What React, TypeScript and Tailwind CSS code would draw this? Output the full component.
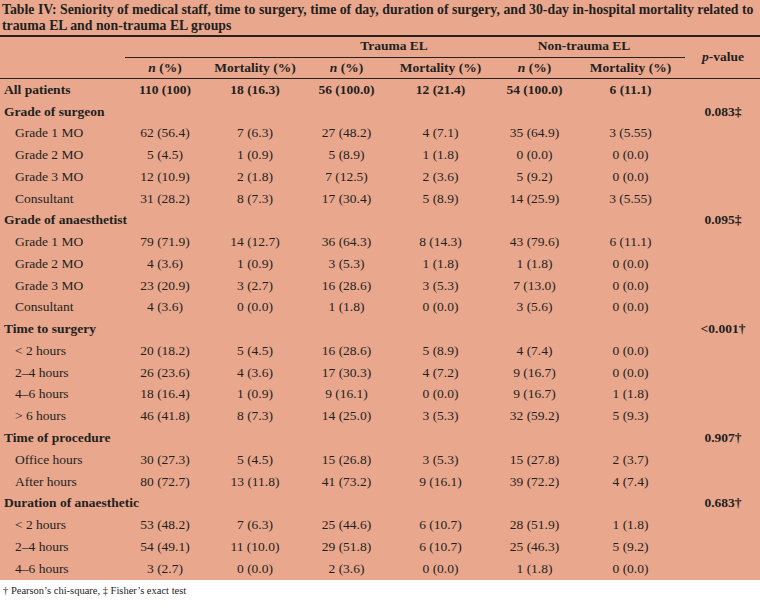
import React from 'react';

type Row = { label: string; cells?: string[]; p?: string; group?: boolean; bold?: boolean };

const rows: Row[] = [
  { label: 'All patients', bold: true, cells: ['110 (100)', '18 (16.3)', '56 (100.0)', '12 (21.4)', '54 (100.0)', '6 (11.1)'] },
  { label: 'Grade of surgeon', group: true, p: '0.083‡' },
  { label: 'Grade 1 MO', cells: ['62 (56.4)', '7 (6.3)', '27 (48.2)', '4 (7.1)', '35 (64.9)', '3 (5.55)'] },
  { label: 'Grade 2 MO', cells: ['5 (4.5)', '1 (0.9)', '5 (8.9)', '1 (1.8)', '0 (0.0)', '0 (0.0)'] },
  { label: 'Grade 3 MO', cells: ['12 (10.9)', '2 (1.8)', '7 (12.5)', '2 (3.6)', '5 (9.2)', '0 (0.0)'] },
  { label: 'Consultant', cells: ['31 (28.2)', '8 (7.3)', '17 (30.4)', '5 (8.9)', '14 (25.9)', '3 (5.55)'] },
  { label: 'Grade of anaesthetist', group: true, p: '0.095‡' },
  { label: 'Grade 1 MO', cells: ['79 (71.9)', '14 (12.7)', '36 (64.3)', '8 (14.3)', '43 (79.6)', '6 (11.1)'] },
  { label: 'Grade 2 MO', cells: ['4 (3.6)', '1 (0.9)', '3 (5.3)', '1 (1.8)', '1 (1.8)', '0 (0.0)'] },
  { label: 'Grade 3 MO', cells: ['23 (20.9)', '3 (2.7)', '16 (28.6)', '3 (5.3)', '7 (13.0)', '0 (0.0)'] },
  { label: 'Consultant', cells: ['4 (3.6)', '0 (0.0)', '1 (1.8)', '0 (0.0)', '3 (5.6)', '0 (0.0)'] },
  { label: 'Time to surgery', group: true, p: '<0.001†' },
  { label: '< 2 hours', cells: ['20 (18.2)', '5 (4.5)', '16 (28.6)', '5 (8.9)', '4 (7.4)', '0 (0.0)'] },
  { label: '2–4 hours', cells: ['26 (23.6)', '4 (3.6)', '17 (30.3)', '4 (7.2)', '9 (16.7)', '0 (0.0)'] },
  { label: '4–6 hours', cells: ['18 (16.4)', '1 (0.9)', '9 (16.1)', '0 (0.0)', '9 (16.7)', '1 (1.8)'] },
  { label: '> 6 hours', cells: ['46 (41.8)', '8 (7.3)', '14 (25.0)', '3 (5.3)', '32 (59.2)', '5 (9.3)'] },
  { label: 'Time of procedure', group: true, p: '0.907†' },
  { label: 'Office hours', cells: ['30 (27.3)', '5 (4.5)', '15 (26.8)', '3 (5.3)', '15 (27.8)', '2 (3.7)'] },
  { label: 'After hours', cells: ['80 (72.7)', '13 (11.8)', '41 (73.2)', '9 (16.1)', '39 (72.2)', '4 (7.4)'] },
  { label: 'Duration of anaesthetic', group: true, p: '0.683†' },
  { label: '< 2 hours', cells: ['53 (48.2)', '7 (6.3)', '25 (44.6)', '6 (10.7)', '28 (51.9)', '1 (1.8)'] },
  { label: '2–4 hours', cells: ['54 (49.1)', '11 (10.0)', '29 (51.8)', '6 (10.7)', '25 (46.3)', '5 (9.2)'] },
  { label: '4–6 hours', cells: ['3 (2.7)', '0 (0.0)', '2 (3.6)', '0 (0.0)', '1 (1.8)', '0 (0.0)'] },
];

const cols = 'grid grid-cols-[120px_90px_90px_93px_95px_93px_99px_80px]';

export default function App() {
  return (
    <div className="w-[760px] h-[607px] bg-white text-[#231f20] font-[family-name:Liberation_Serif,serif]">
      <div className="bg-[#e9a88e]">
        <h1 className="pt-[2px] pb-[2px] pl-[2px] pr-[2px] text-[13.8px] leading-[15.5px] font-bold">
          Table IV: Seniority of medical staff, time to surgery, time of day, duration of surgery, and 30-day in-hospital mortality related to trauma EL and non-trauma EL groups
        </h1>
        <div className="h-[2px] bg-[#2a2020]" />

        {/* header */}
        <div className={`${cols} grid-rows-[20px_1px_20px] text-[13.5px] font-bold`}>
          <div className="col-start-4 col-span-2 row-start-1 flex items-end justify-center pb-[1px]">Trauma EL</div>
          <div className="col-start-6 col-span-2 row-start-1 flex items-end justify-center pb-[1px]">Non-trauma EL</div>
          <div className="col-start-2 col-span-6 row-start-2 ml-[5px] -mr-[5px] bg-[#2a2020]" />
          <div className="col-start-8 row-start-1 row-span-3 flex items-center justify-center pl-[6px]">
            <span><i>p</i>-value</span>
          </div>
          {['n (%)', 'Mortality (%)', 'n (%)', 'Mortality (%)', 'n (%)', 'Mortality (%)'].map((h, i) => (
            <div key={i} className="row-start-3 flex items-center justify-center" style={{ gridColumnStart: i + 2 }}>
              {h.startsWith('n') ? (<span><i>n</i> (%)</span>) : h}
            </div>
          ))}
        </div>
        <div className="h-[1px] bg-[#2a2020]" />

        {/* body */}
        <div className="text-[13.5px]">
          {rows.map((r, i) => (
            <div key={i} className={`${cols} h-[21.78px] items-center`}>
              <div className={r.group || r.bold ? 'pl-[4px] font-bold whitespace-nowrap' : 'pl-[15px] whitespace-nowrap'}>
                {r.label}
              </div>
              {(r.cells ?? ['', '', '', '', '', '']).map((c, j) => (
                <div key={j} className={`text-center whitespace-nowrap ${r.bold ? 'font-bold' : ''}`}>{c}</div>
              ))}
              <div className="text-center font-bold pl-[6px] whitespace-nowrap">{r.p ?? ''}</div>
            </div>
          ))}
        </div>
      </div>
      <p className="pl-[3px] pt-[4px] text-[10.5px] leading-[13px]">† Pearson’s chi-square, ‡ Fisher’s exact test</p>
    </div>
  );
}
